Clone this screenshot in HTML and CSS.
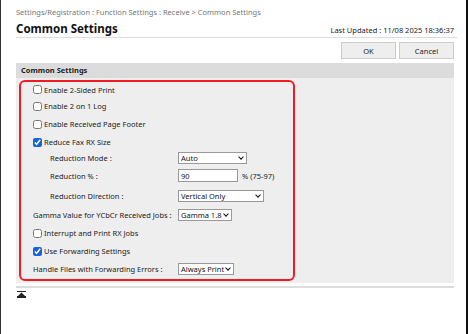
FILE: index.html
```html
<!DOCTYPE html>
<html>
<head>
    <meta charset="UTF-8">
    <title>Common Settings</title>
    <link rel="stylesheet" href="styles.css">
</head>
<body>
    <div class="frame">
        <div class="breadcrumb">Settings/Registration : Function Settings : Receive &gt; Common Settings</div>

        <!-- Title and update time -->
        <div class="title-row">
            <h1>Common Settings</h1>
            <span class="updated">Last Updated : 11/08 2025 18:36:37</span>
        </div>
        <div class="actions">
            <button type="button">OK</button>
            <button type="button">Cancel</button>
        </div>

        <!-- Settings panel -->
        <div class="panel">
            <div class="panel-head">Common Settings</div>
            <div class="panel-body">
                <div class="highlight">
                    <label class="row first"><input type="checkbox"> Enable 2-Sided Print</label>
                    <label class="row"><input type="checkbox"> Enable 2 on 1 Log</label>
                    <label class="row"><input type="checkbox"> Enable Received Page Footer</label>
                    <label class="row"><input type="checkbox" checked> Reduce Fax RX Size</label>

                    <div class="row sub mode">
                        <span class="name">Reduction Mode :</span>
                        <span class="sel w-mode"><select><option>Auto</option></select></span>
                    </div>
                    <div class="row sub pct">
                        <span class="name">Reduction % :</span>
                        <input type="text" class="num" value="90">
                        <span class="hint">% (75-97)</span>
                    </div>
                    <div class="row sub dir">
                        <span class="name">Reduction Direction :</span>
                        <span class="sel w-dir"><select><option>Vertical Only</option></select></span>
                    </div>

                    <div class="row field gamma">
                        <span class="name">Gamma Value for YCbCr Received Jobs :</span>
                        <span class="sel w-gamma"><select><option>Gamma 1.8</option></select></span>
                    </div>
                    <label class="row"><input type="checkbox"> Interrupt and Print RX Jobs</label>
                    <label class="row"><input type="checkbox" checked> Use Forwarding Settings</label>
                    <div class="row field">
                        <span class="name">Handle Files with Forwarding Errors :</span>
                        <span class="sel w-print"><select><option>Always Print</option></select></span>
                    </div>
                </div>
            </div>
        </div>

        <div class="footer">
            <a href="#" class="to-top" title="Top">
                <svg width="9" height="7" viewBox="0 0 9 7">
                    <rect x="0" y="0" width="9" height="1" fill="#222"/>
                    <polygon points="4.5,1.5 8,5 1,5" fill="#222"/>
                    <rect x="0" y="5" width="9" height="2" fill="#222"/>
                </svg>
            </a>
        </div>
    </div>
</body>
</html>
```

FILE: styles.css
```css
html, body {
    margin: 0;
    background: #fff;
}
body {
    font-family: "Noto Sans", "Open Sans", sans-serif;
    font-size: 7.5px;
    color: #333;
}
.frame {
    height: 334px;
    box-sizing: border-box;
    border-left: 1px solid #333;
    border-right: 2px solid #111;
    margin-right: 1px;
    padding: 0 12px 0 15px;
}
.breadcrumb {
    padding-top: 7px;
    height: 11px;
    line-height: 11px;
    color: #777;
}
.title-row {
    display: flex;
    justify-content: space-between;
    align-items: flex-end;
    margin-top: 4px;
    padding-bottom: 1px;
    border-bottom: 1px solid #ddd;
    margin-right: -3px;
}
h1 {
    margin: 0;
    font-size: 11.5px;
    line-height: 14px;
    color: #111;
}
.updated {
    color: #222;
    font-size: 7.5px;
    line-height: 12px;
    margin-right: 3px;
}
.actions {
    display: flex;
    justify-content: flex-end;
    gap: 3px;
    margin-top: 4px;
}
.actions button {
    width: 55px;
    height: 17px;
    padding: 0;
    font-family: inherit;
    font-size: 7.5px;
    color: #222;
    background: #eee;
    border: 1px solid #ccc;
}
.panel {
    margin-top: 4px;
    background: #eee;
}
.panel-head {
    background: #dcdcdc;
    font-weight: bold;
    height: 15px;
    line-height: 15px;
    padding-left: 5px;
    color: #222;
}
.panel-body {
    padding: 2px 0 2px 3px;
}
.highlight {
    width: 260px;
    border: 2px solid #f21b23;
    border-radius: 6px;
    padding: 0 0 1px 12px;
}
.row {
    display: flex;
    align-items: center;
    height: 18px;
    color: #222;
}
.row.first {
    height: 15px;
}
.row.mode {
    height: 14px;
}
.row.pct {
    height: 21px;
}
.row.dir,
.row.gamma {
    height: 19px;
}
.row input[type="checkbox"] {
    width: 9px;
    height: 9px;
    margin: 0 2px 0 0;
    accent-color: #1565d8;
}
.row .name {
    flex: none;
}
.sub .name {
    width: 128px;
    padding-left: 17px;
}
.field .name {
    width: 145px;
}
.sel {
    position: relative;
    display: inline-block;
    height: 12px;
}
.sel select {
    appearance: none;
    width: 100%;
    height: 12px;
}
.sel::after {
    content: "";
    position: absolute;
    right: 4px;
    top: 3px;
    width: 3px;
    height: 3px;
    border-right: 1.3px solid #111;
    border-bottom: 1.3px solid #111;
    transform: rotate(45deg);
    pointer-events: none;
}
select, .num {
    font-family: inherit;
    font-size: 7.5px;
    color: #111;
    padding: 0 0 0 2px;
    background: #fff;
    border: 1px solid #999;
    border-radius: 0;
    box-sizing: border-box;
}
.num {
    width: 60px;
    height: 13px;
}
.w-mode {
    width: 69px;
}
.w-dir {
    width: 86px;
}
.w-gamma {
    width: 54px;
}
.w-print {
    width: 56px;
}
.hint {
    margin-left: 4px;
}
.footer {
    margin-top: 3px;
    border-top: 2px solid #ddd;
    padding: 2px 0 0 1px;
}
.to-top {
    display: inline-block;
    line-height: 0;
}
```
